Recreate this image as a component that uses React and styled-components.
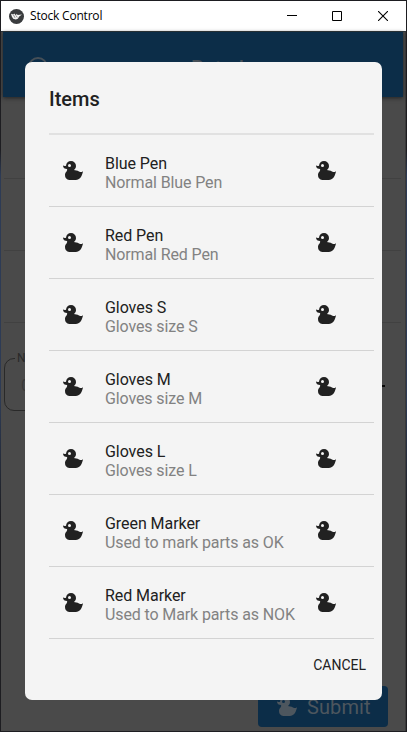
import React from 'react';
import styled, { createGlobalStyle } from 'styled-components';

const Global = createGlobalStyle`
  * { box-sizing: border-box; }
  html, body { margin: 0; height: 100%; overflow: hidden; background: #1c1c1e; }
`;
const Window = styled.div`
  position: relative;
  width: 407px;
  height: 732px;
  display: flex;
  flex-direction: column;
  padding: 1px;
  background: linear-gradient(#1d1d21 150px, #2d3b55 175px, #2d3b55 400px, #1d1d21 520px);
  font-family: Roboto, sans-serif;
  overflow: hidden;
`;
const TitleBar = styled.header`
  height: 30px;
  flex: none;
  display: flex;
  align-items: center;
  padding-left: 8px;
  background: #fff;
  color: #000;
`;
const TitleText = styled.span`
  flex: 1;
  margin-left: 6px;
  font: 12px/16px 'Open Sans', sans-serif;
  letter-spacing: -0.2px;
`;
const Controls = styled.div`
  display: flex;
  gap: 35px;
  padding-right: 18px;

  svg:last-child { margin-left: 1px; }
`;
const Page = styled.main`
  flex: 1;
  display: flex;
  flex-direction: column;
  border-top: 1px solid #2b353b;
  border-right: 1px solid #3a3a3a;
  background: #4a4a4a;
`;
const Toolbar = styled.div`
  height: 65px;
  flex: none;
  display: flex;
  align-items: center;
  margin: 0 2px 0 2px;
  padding: 4px 0 0 25px;
  background: #0c2d48;
  color: #464f57;
  box-shadow: 0 1px 4px #222;
`;
const ToolbarTitle = styled.span`
  margin-left: 143px;
  padding-top: 2px;
  font: 500 20px/24px Roboto, sans-serif;
`;
const BackRow = styled.div`
  height: ${p => p.$h}px;
  flex: none;
  margin: 0 4px 0 3px;
  border-bottom: 1px solid #414141;
`;
const FieldRow = styled.div`
  display: flex;
  align-items: center;
  justify-content: space-between;
  margin: 28px 20px 0 3px;
`;
const Field = styled.fieldset`
  width: 200px;
  height: 60px;
  margin: 0;
  padding: 11px 16px;
  border: 1px solid #292929;
  border-radius: 10px;
  color: #393939;
  font-size: 16px;
`;
const Legend = styled.legend`
  margin-left: -6px;
  padding: 0 2px;
  color: #292929;
  font-size: 12px;
  line-height: 14px;
`;
const Dash = styled.span`
  width: 10px;
  height: 2px;
  margin-top: 9px;
  background: #080808;
`;
const Submit = styled.div`
  width: 130px;
  height: 41px;
  margin: auto 17px 4px auto;
  padding: 1px 0 0 17px;
  display: flex;
  align-items: center;
  gap: 8px;
  border-radius: 4px;
  background: #0c2d48;
  color: #4d565e;
  font-size: 20px;
  letter-spacing: 0.1px;
`;
const Dialog = styled.section`
  position: absolute;
  left: 25px;
  top: 62px;
  width: 357px;
  height: 638px;
  padding: 24px 8px 8px 24px;
  display: flex;
  flex-direction: column;
  border-radius: 7px;
  background: #f4f4f4;
`;
const Heading = styled.h1`
  margin: 0;
  height: 47px;
  color: #212121;
  font: 500 20px/26px Roboto, sans-serif;
`;
const List = styled.ul`
  margin: 0;
  padding: 0;
  list-style: none;
  border-top: 2px solid #e1e1e1;
`;
const Item = styled.li`
  height: 72px;
  display: flex;
  align-items: flex-start;
  padding: 23.5px 36px 0 12px;
  border-bottom: 1px solid #d3d3d3;
  color: #212121;
`;
const Texts = styled.div`
  flex: 1;
  margin: -5px 0 0 20px;
  font-size: 16px;
  line-height: 19px;
  letter-spacing: -0.06px;
  white-space: nowrap;
`;
const Secondary = styled.div`
  color: #828282;
  letter-spacing: -0.12px;
`;
const Actions = styled.div`
  display: flex;
  justify-content: flex-end;
  padding: 17px 8px 0 0;
`;
const TextButton = styled.button`
  padding: 0;
  border: 0;
  background: none;
  color: #212121;
  font: 14px/18px Roboto, sans-serif;
`;

const Duck = ({ size = 24 }) => (
  <svg width={size} height={size} viewBox="0 0 24 24" fill="currentColor">
    <path d="M8.5,5A1.5,1.5 0 0,0 7,6.5A1.5,1.5 0 0,0 8.5,8A1.5,1.5 0 0,0 10,6.5A1.5,1.5 0 0,0 8.5,5M10,2A5,5 0 0,1 15,7C15,8.7 14.15,10.2 12.86,11.1C14.44,11.25 16.22,11.61 18,12.5C21,14 22,12 22,12C22,12 21,21 15,21H9C9,21 4,21 4,16C4,13 7,12 6,10C2,10 2,6.5 2,6.5C3,7 4.24,7 5,6.65C5.19,4.05 7.36,2 10,2Z" />
  </svg>
);

const Logo = () => (
  <svg width="15" height="15" viewBox="0 0 15 15">
    <circle cx="7.5" cy="7.5" r="7.5" fill="#3a3c3e" />
    <path d="M2 4.7l2.4.8.8-.9 1.6 1.6 1-1.4.8 1.2 4.4-.6-2.8 2-1.4 2.3-2 .8-2.6-.8-1.4-2.2z" fill="#f4f4f4" />
    <path d="M4.5 6l1.5 2.8M7 6.4l1.2 2" stroke="#666" strokeWidth=".7" />
  </svg>
);

const items = [
  ['Blue Pen', 'Normal Blue Pen'],
  ['Red Pen', 'Normal Red Pen'],
  ['Gloves S', 'Gloves size S'],
  ['Gloves M', 'Gloves size M'],
  ['Gloves L', 'Gloves size L'],
  ['Green Marker', 'Used to mark parts as OK'],
  ['Red Marker', 'Used to Mark parts as NOK'],
];

export default function App() {
  return (
    <Window>
      <Global />
      <TitleBar>
        <Logo />
        <TitleText>Stock Control</TitleText>
        <Controls>
          <svg width="10" height="10" viewBox="0 0 10 10"><path d="M0 4.5h10" stroke="#000" /></svg>
          <svg width="10" height="10" viewBox="0 0 10 10"><path d="M.5.5h9v9h-9z" fill="none" stroke="#000" /></svg>
          <svg width="10" height="10" viewBox="0 0 10 10"><path d="M0 0l10 10M10 0L0 10" stroke="#000" strokeWidth="1.1" /></svg>
        </Controls>
      </TitleBar>
      <Page>
        <Toolbar>
          <svg width="20" height="20" viewBox="0 0 20 20"><circle cx="10" cy="10" r="9" fill="none" stroke="currentColor" strokeWidth="2" /></svg>
          <ToolbarTitle>Rotado</ToolbarTitle>
        </Toolbar>
        <BackRow $h={82} />
        <BackRow $h={72} />
        <BackRow $h={72} />
        <FieldRow>
          <Field><Legend>N</Legend>0</Field>
          <Dash />
        </FieldRow>
        <Submit><Duck />Submit</Submit>
      </Page>
      <Dialog>
        <Heading>Items</Heading>
        <List>
          {items.map(([name, detail]) => (
            <Item key={name}>
              <Duck />
              <Texts>
                <div>{name}</div>
                <Secondary>{detail}</Secondary>
              </Texts>
              <Duck />
            </Item>
          ))}
        </List>
        <Actions><TextButton>CANCEL</TextButton></Actions>
      </Dialog>
    </Window>
  );
}
